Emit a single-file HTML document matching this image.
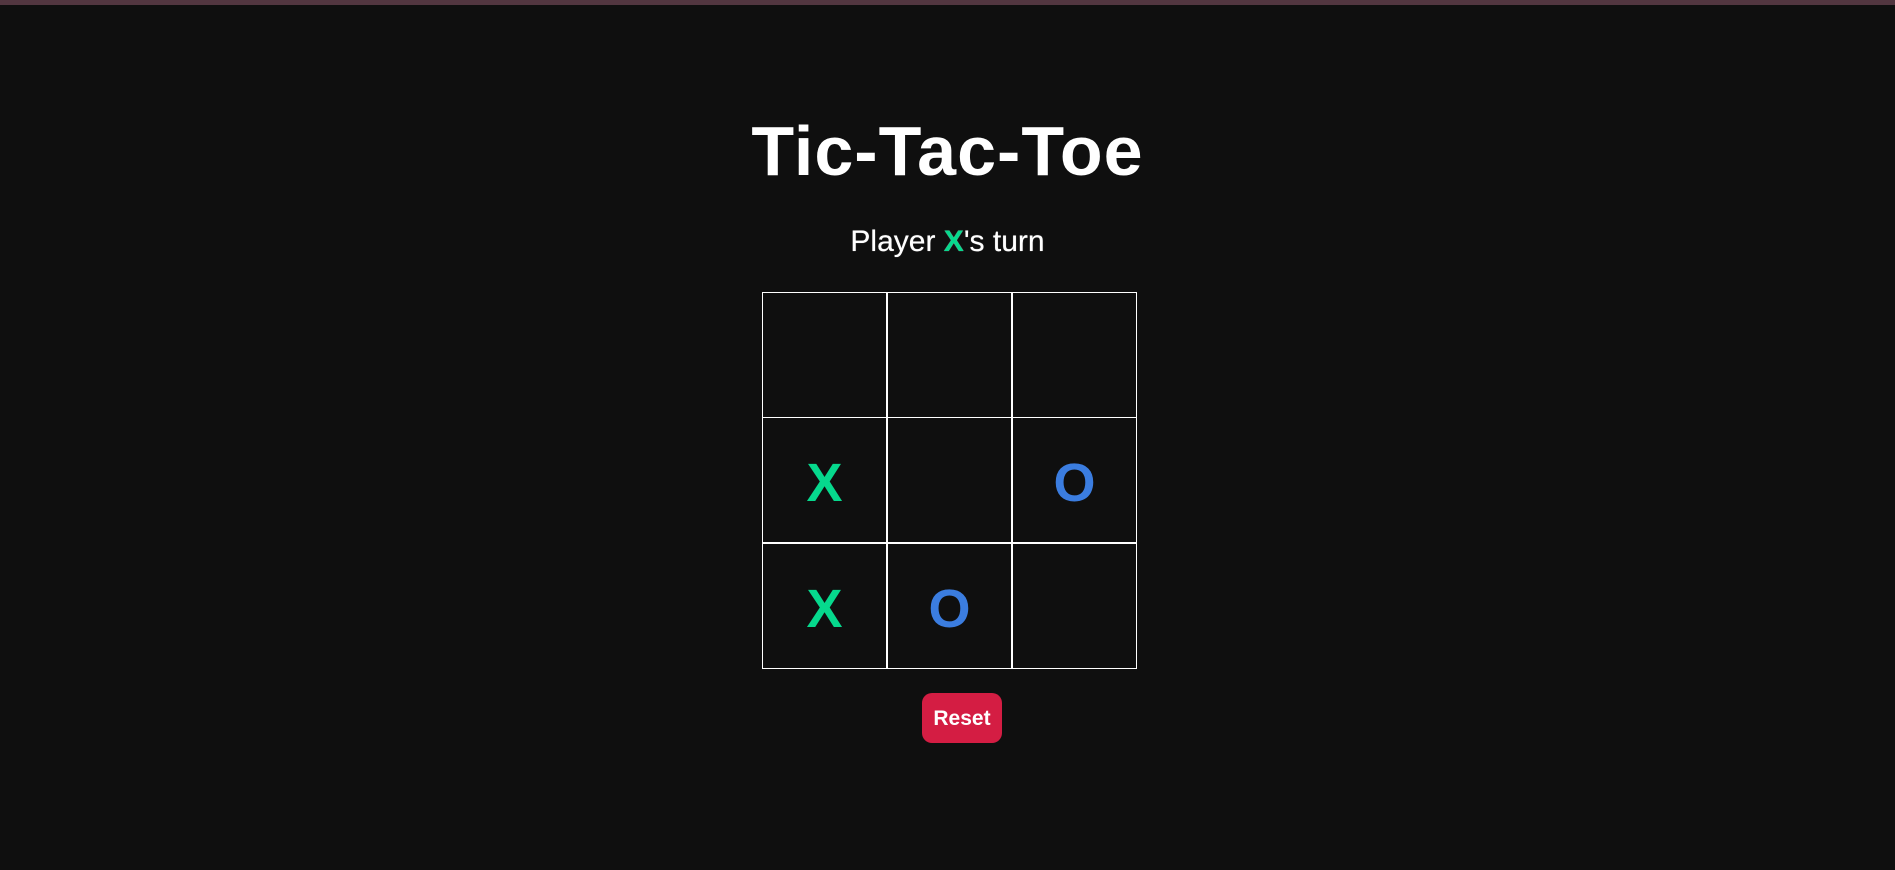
<!DOCTYPE html>
<html><head><style>
html,body{margin:0;padding:0;}
body{width:1895px;height:870px;background:#0f0f0f;position:relative;overflow:hidden;font-family:"Liberation Sans",sans-serif;color:#fff;}
.bar{position:absolute;left:0;top:0;width:1895px;height:5px;background:#523640;}
h1{position:absolute;left:0;width:1895px;top:111px;margin:0;text-align:center;font-size:70px;font-weight:bold;line-height:80px;letter-spacing:1px;}
.turn{position:absolute;left:0;width:1895px;top:224px;text-align:center;font-size:30px;line-height:36px;text-shadow:0 0 0.6px #fff;}
.turn b{color:#06d98d;font-weight:bold;}
.grid{position:absolute;left:762px;top:292px;width:375px;height:377px;}
.c{position:absolute;box-sizing:border-box;border:1.5px solid #fff;width:125px;height:126px;display:flex;align-items:center;justify-content:center;font-size:54px;font-weight:bold;padding-top:6px;}
.x{color:#06d98d;}
.o{color:#3b7de0;}
.btn{position:absolute;left:922px;top:693px;width:80px;height:50px;background:#d41d43;border-radius:10px;text-align:center;line-height:52px;font-size:21px;font-weight:bold;}
</style></head><body>
<div class="bar"></div>
<h1>Tic-Tac-Toe</h1>
<div class="turn">Player <b>X</b>'s turn</div>
<div class="grid">
<div class="c" style="left:0;top:0"></div>
<div class="c" style="left:125px;top:0"></div>
<div class="c" style="left:250px;top:0"></div>
<div class="c x" style="left:0;top:125px">X</div>
<div class="c" style="left:125px;top:125px"></div>
<div class="c o" style="left:250px;top:125px">O</div>
<div class="c x" style="left:0;top:251px">X</div>
<div class="c o" style="left:125px;top:251px">O</div>
<div class="c" style="left:250px;top:251px"></div>
</div>
<div class="btn">Reset</div>
</body></html>
